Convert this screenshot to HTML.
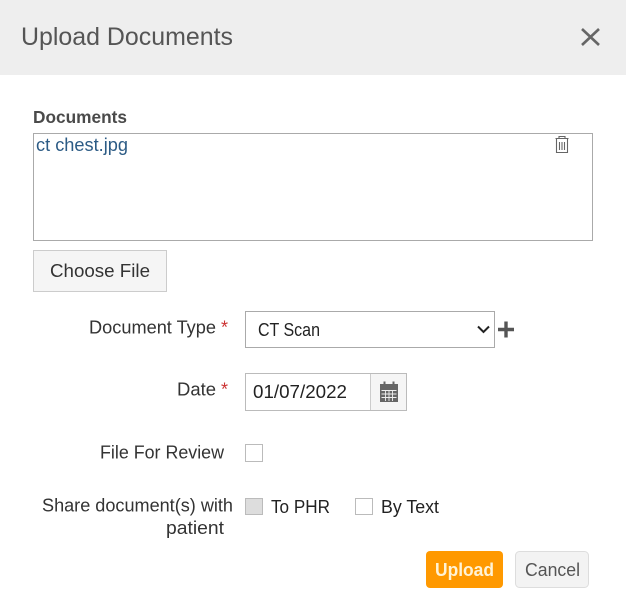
<!DOCTYPE html>
<html><head><meta charset="utf-8"><style>
html,body{margin:0;padding:0;background:#fff;width:627px;height:615px;overflow:hidden}
svg{display:block}
text{font-family:"Liberation Sans",sans-serif;font-size:18px;fill:#333}
</style></head><body>
<svg width="627" height="615" viewBox="0 0 627 615" xmlns="http://www.w3.org/2000/svg">
<rect x="0" y="0" width="626" height="75" fill="#eeeeee"/>
<text x="21" y="45" style="font-size:25px;fill:#555" textLength="212" lengthAdjust="spacingAndGlyphs">Upload Documents</text>
<path d="M582 29L599 45M599 29L582 45" stroke="#666" stroke-width="2.600" fill="none"/>
<text x="33" y="123" style="font-size:17.500px;font-weight:bold;fill:#4a4a4a" textLength="94" lengthAdjust="spacingAndGlyphs">Documents</text>
<rect x="33.500" y="133.500" width="559" height="107" fill="#fff" stroke="#aaa"/>
<text x="36" y="151" style="font-size:18.500px;fill:#2c5b85" textLength="92" lengthAdjust="spacingAndGlyphs">ct chest.jpg</text>
<path d="M555.500 138.500H568.500M559 138.500V136.500H565V138.500M556.500 139V152.500H567.500V139M559.500 142V150M562 142V150M564.500 142V150" stroke="#666" stroke-width="1.100" fill="none"/>
<rect x="33.500" y="250.500" width="133" height="41" fill="#f5f5f5" stroke="#ccc"/>
<text x="50" y="277" style="font-size:18.500px" textLength="100" lengthAdjust="spacingAndGlyphs">Choose File</text>
<text x="89" y="333.500" textLength="127" lengthAdjust="spacingAndGlyphs">Document Type</text>
<text x="221" y="333.500" style="fill:#c33">*</text>
<rect x="245.500" y="311.500" width="249" height="36" fill="#fff" stroke="#aaa"/>
<text x="258" y="336" style="font-size:18.500px;fill:#222" textLength="62" lengthAdjust="spacingAndGlyphs">CT Scan</text>
<path d="M478 326.500L483.500 332L489 326.500" stroke="#222" stroke-width="2" fill="none"/>
<path d="M498 329.500H514M506 321.500V337.500" stroke="#555" stroke-width="3.400" fill="none"/>
<text x="177" y="395.500" textLength="39" lengthAdjust="spacingAndGlyphs">Date</text>
<text x="221" y="395.500" style="fill:#c33">*</text>
<rect x="245.500" y="373.500" width="161" height="37" fill="#fff" stroke="#bbb"/>
<rect x="371" y="374" width="35" height="36" fill="#f5f5f5"/>
<path d="M370.500 374V410" stroke="#ccc"/>
<text x="253" y="398" style="font-size:18.500px;fill:#222" textLength="94" lengthAdjust="spacingAndGlyphs">01/07/2022</text>
<rect x="380" y="384" width="18" height="18" fill="#666"/>
<path d="M384.500 381.500V385.500M393.500 381.500V385.500" stroke="#666" stroke-width="2"/>
<path d="M381.500 390.500H396.500M381.500 394H396.500M381.500 397.500H396.500M385.500 390V401M389 390V401M392.500 390V401" stroke="#eee" stroke-width="0.900"/>
<text x="100" y="458.500" textLength="124" lengthAdjust="spacingAndGlyphs">File For Review</text>
<rect x="245.500" y="444.500" width="17" height="17" fill="#fff" stroke="#bbb"/>
<text x="42" y="511.500" textLength="191" lengthAdjust="spacingAndGlyphs">Share document(s) with</text>
<text x="166" y="534" textLength="58" lengthAdjust="spacingAndGlyphs">patient</text>
<rect x="245.500" y="498.500" width="17" height="16" fill="#dddddd" stroke="#bbb"/>
<text x="271" y="513" style="fill:#222" textLength="59" lengthAdjust="spacingAndGlyphs">To PHR</text>
<rect x="355.500" y="498.500" width="17" height="16" fill="#fff" stroke="#bbb"/>
<text x="381" y="513" style="fill:#222" textLength="58" lengthAdjust="spacingAndGlyphs">By Text</text>
<rect x="426" y="551" width="77" height="37" rx="4" fill="#ff9900"/>
<text x="435" y="576" style="font-weight:bold;fill:#fff3d6" textLength="59" lengthAdjust="spacingAndGlyphs">Upload</text>
<rect x="515.500" y="551.500" width="73" height="36" rx="4" fill="#f3f3f3" stroke="#ddd"/>
<text x="525" y="576" style="fill:#555" textLength="55" lengthAdjust="spacingAndGlyphs">Cancel</text>
</svg>
</body></html>
